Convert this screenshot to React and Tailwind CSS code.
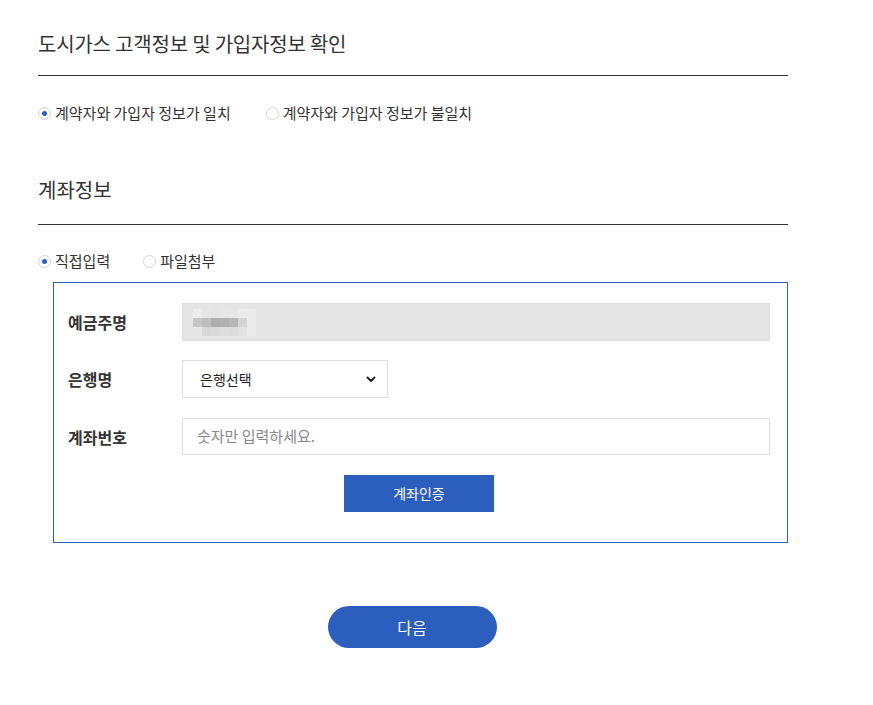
import { useState } from "react";

const font = { fontFamily: '"Noto Sans CJK KR", "Noto Sans", sans-serif' };

function Radio({ checked, label, onClick }) {
  return (
    <label className="flex items-center gap-[4px] cursor-pointer" onClick={onClick}>
      <span className="flex items-center justify-center w-[13px] h-[13px] rounded-full border border-[#d4d4d4] bg-white">
        {checked && <span className="w-[5px] h-[5px] rounded-full bg-[#2b5ebd]" />}
      </span>
      <span className="text-[15px] leading-5 text-[#333]">{label}</span>
    </label>
  );
}

function BlurName() {
  const cells = [
    ["#ececec", "#e7e7e7", "#e4e4e4", "#e6e6e6", "#e7e7e7", "#ebebeb", "#ececec"],
    ["#c6c6c6", "#bdbdbd", "#aeaeae", "#b1b1b1", "#b7b7b7", "#d4d4d4", "#eaeaea"],
    ["#e6e6e6", "#d7d7d7", "#d9d9d9", "#dedede", "#dcdcdc", "#e2e2e2", "#ebebeb"],
  ];
  return (
    <div className="flex flex-col">
      {cells.map((row, i) => (
        <div key={i} className="flex">
          {row.map((c, j) => (
            <span key={j} className="w-[9px] h-[9px]" style={{ background: c }} />
          ))}
        </div>
      ))}
    </div>
  );
}

function Row({ label, children }) {
  return (
    <div className="flex items-center">
      <div className="w-[114px] text-[16px] font-bold text-[#333]">{label}</div>
      {children}
    </div>
  );
}

export default function App() {
  const [match, setMatch] = useState(true);
  const [direct, setDirect] = useState(true);

  return (
    <div className="bg-white min-h-[705px]" style={font}>
      <div className="w-[750px] ml-[38px] pt-[29px]">
        <h2 className="text-[20px] leading-[30px] font-normal text-[#333] pb-4 border-b border-[#333] tracking-[-0.2px]">
          도시가스 고객정보 및 가입자정보 확인
        </h2>
        <div className="flex gap-[35px] mt-[27px]">
          <Radio checked={match} label="계약자와 가입자 정보가 일치" onClick={() => setMatch(true)} />
          <Radio checked={!match} label="계약자와 가입자 정보가 불일치" onClick={() => setMatch(false)} />
        </div>

        <h2 className="mt-[52px] text-[20px] leading-[30px] font-normal text-[#333] pb-[19px] border-b border-[#333]">
          계좌정보
        </h2>
        <div className="flex gap-[33px] mt-[26px]">
          <Radio checked={direct} label="직접입력" onClick={() => setDirect(true)} />
          <Radio checked={!direct} label="파일첨부" onClick={() => setDirect(false)} />
        </div>

        <div className="ml-[15px] mt-[11px] w-[735px] border border-solid border-[color:#2b5ebd] pt-5 pb-[30px] pl-[14px] pr-[17px] flex flex-col gap-[19px]">
          <Row label="예금주명">
            <div className="flex-1 h-[38px] bg-[#e5e5e5] border border-[#dddddd] flex items-center pl-[10px]">
              <BlurName />
            </div>
          </Row>
          <Row label="은행명">
            <div className="w-[206px] h-[38px] border border-[#dddddd] flex items-center justify-between pl-[17px] pr-[10px]">
              <span className="text-[14px] text-[#222]">은행선택</span>
              <svg width="12" height="12" viewBox="0 0 12 12" fill="none">
                <path d="M2.5 4.5L6 8L9.5 4.5" stroke="#222" strokeWidth="2" strokeLinecap="round" strokeLinejoin="round" />
              </svg>
            </div>
          </Row>
          <div className="flex items-center mt-px">
            <div className="w-[114px] text-[16px] font-bold text-[#333]">계좌번호</div>
            <div className="flex-1 h-[37px] border border-[#dddddd] flex items-center pl-[14px]">
              <span className="text-[15px] text-[#888]">숫자만 입력하세요.</span>
            </div>
          </div>
          <div className="flex justify-center mt-px">
            <button className="w-[150px] h-[37px] bg-[#2b5ebd] text-white text-[14px]">계좌인증</button>
          </div>
        </div>

        <div className="flex justify-center mt-[63px] pr-[2px]">
          <button className="w-[169px] h-[42px] rounded-full bg-[#2b5ebd] text-white text-[16px]">다음</button>
        </div>
      </div>
    </div>
  );
}
